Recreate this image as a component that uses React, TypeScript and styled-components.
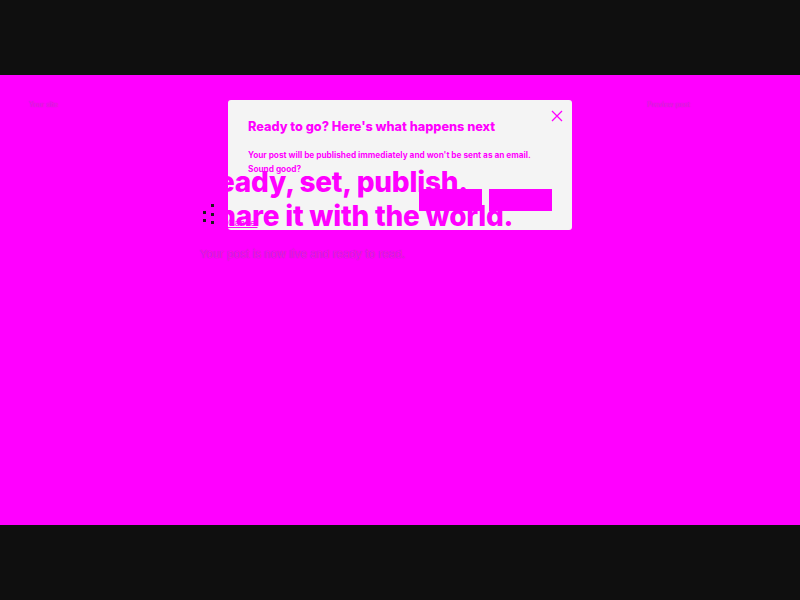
import styled, { createGlobalStyle } from "styled-components";

const Global = createGlobalStyle`
  html, body {
    margin: 0;
    padding: 0;
    background: #111;
  }
  body {
    font-family: Inter, "Liberation Sans", sans-serif;
  }
`;

const Page = styled.div`
  width: 800px;
  height: 600px;
  overflow: hidden;
  background: #0f0f0f;
  display: flex;
  flex-direction: column;
  justify-content: center;
`;

const Canvas = styled.div`
  position: relative;
  height: 450px;
  background: #ff00ff;
`;

const TopBar = styled.div`
  display: flex;
  justify-content: space-between;
  padding: 26px 110px 0 29px;
  height: 14px;
  font-size: 7px;
  line-height: 8px;
  color: #ff00ff;
  text-shadow: 0 0 1px rgba(70, 130, 70, 0.7);
`;

const Body = styled.div`
  position: relative;
  z-index: 2;
  width: 400px;
  margin: 50px auto 0;
`;

const Headline = styled.h1`
  margin: 0;
  font-size: 28px;
  font-weight: 800;
  line-height: 34px;
  letter-spacing: -0.23px;
  color: #ff00ff;
`;

const Spinner = styled.svg`
  position: absolute;
  left: 3px;
  top: 39px;
`;

const Sub = styled.p`
  margin: 13px 0 0;
  font-size: 11px;
  line-height: 16px;
  color: #ff00ff;
  text-shadow: 0 0 1px rgba(70, 130, 70, 0.8);
`;

const Modal = styled.div`
  position: absolute;
  z-index: 1;
  left: 228px;
  top: 25px;
  width: 344px;
  height: 130px;
  box-sizing: border-box;
  padding: 19px 20px;
  background: #f4f4f4;
  border-radius: 3px;
  color: #ff00ff;
`;

const ModalTitle = styled.h2`
  margin: 0;
  font-size: 12.7px;
  line-height: 16px;
  font-weight: 800;
`;

const ModalText = styled.p`
  margin: 13px 0 0;
  font-size: 8.25px;
  line-height: 14px;
  font-weight: 700;
`;

const Close = styled.button`
  position: absolute;
  top: 9px;
  right: 8px;
  width: 14px;
  height: 14px;
  padding: 0;
  border: 0;
  background: none;
  display: flex;
`;

const Actions = styled.div`
  position: absolute;
  right: 20px;
  bottom: 19px;
  display: flex;
  gap: 7px;
`;

const Action = styled.button`
  width: 63px;
  height: 22px;
  border: 0;
  padding: 0;
  background: #ff00ff;
`;

const BackLink = styled.a`
  position: absolute;
  left: 0;
  bottom: 2px;
  font-size: 9px;
  line-height: 11px;
  color: #ff00ff;
  text-decoration: underline;
`;

// the loader only shows as a few dark marks down the left of the headline
const spinnerDots = [
  [8, 0],
  [0, 7],
  [8, 9],
  [0, 15],
  [8, 17],
];

export default function App() {
  return (
    <Page>
      <Global />
      <Canvas>
        <TopBar>
          <span>Your site</span>
          <span>Preview post</span>
        </TopBar>
        <Body>
          <Headline>
            Ready, set, publish.
            <br />
            Share it with the world.
          </Headline>
          <Spinner width="14" height="22" viewBox="0 0 14 22">
            {spinnerDots.map(([x, y]) => (
              <rect key={`${x}-${y}`} x={x} y={y} width="3" height="3" fill="#1c1c1c" />
            ))}
          </Spinner>
          <Sub>Your post is now live and ready to read.</Sub>
        </Body>
        <Modal>
          <ModalTitle>Ready to go? Here's what happens next</ModalTitle>
          <ModalText>
            Your post will be published immediately and won't be sent as an email. Sound good?
          </ModalText>
          <Close aria-label="Close">
            <svg width="14" height="14" viewBox="0 0 14 14" fill="none" stroke="#ff00ff" strokeWidth="1.3">
              <path d="M2 2l10 10M12 2L2 12" />
            </svg>
          </Close>
          <BackLink>Cancel</BackLink>
          <Actions>
            <Action />
            <Action />
          </Actions>
        </Modal>
      </Canvas>
    </Page>
  );
}
